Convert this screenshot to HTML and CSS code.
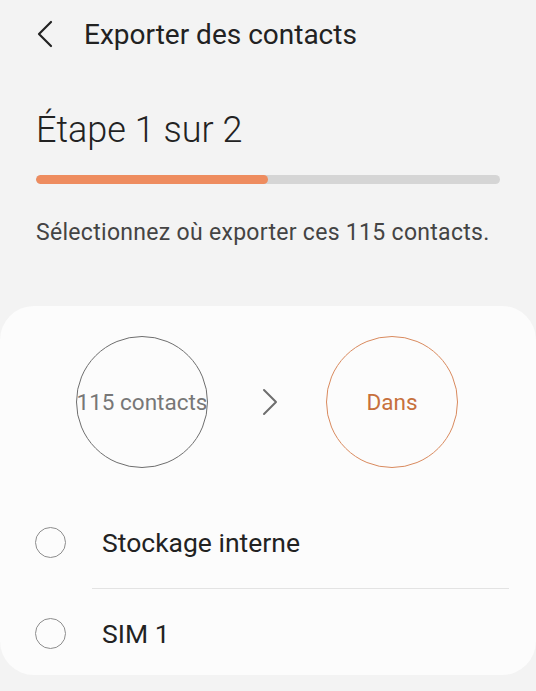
FILE: index.html
```html
<!DOCTYPE html>
<html lang="fr">
<head>
<meta charset="utf-8">
<link rel="stylesheet" href="styles.css">
</head>
<body>
<header class="appbar">
  <svg class="back" width="18" height="28" viewBox="0 0 18 28"><path d="M15 2 L3 14 L15 26" fill="none" stroke="#222" stroke-width="2.2" stroke-linecap="round" stroke-linejoin="round"/></svg>
  <h1 class="title">Exporter des contacts</h1>
</header>
<h2 class="step">Étape 1 sur 2</h2>
<div class="progress"><div class="progress-fill" style="width:50%"></div></div>
<p class="desc">Sélectionnez où exporter ces 115 contacts.</p>
<section class="card">
  <div class="flow">
    <div class="bubble bubble-src">115 contacts</div>
    <svg class="arrow" width="18" height="28" viewBox="0 0 18 28"><path d="M3 2 L15 14 L3 26" fill="none" stroke="#6e6e6e" stroke-width="2" stroke-linecap="round" stroke-linejoin="round"/></svg>
    <div class="bubble bubble-dst">Dans</div>
  </div>
  <ul class="options">
    <li class="option"><span class="radio"></span><span class="label">Stockage interne</span></li>
    <li class="option"><span class="radio"></span><span class="label">SIM 1</span></li>
  </ul>
</section>
</body>
</html>
```
FILE: styles.css
```css
html, body {
  margin: 0;
  padding: 0;
}
body {
  background: #f3f3f3;
  font-family: Roboto, "Noto Sans", "Liberation Sans", sans-serif;
  color: #1f1f1f;
  width: 536px;
  height: 691px;
  overflow: hidden;
}
.appbar {
  display: flex;
  align-items: center;
  height: 68px;
  padding-left: 36px;
}
.back {
  display: block;
  margin-right: 30px;
}
.title {
  margin: 0;
  font-size: 28px;
  font-weight: 400;
  color: #222;
}
.step {
  margin: 38px 0 0 36px;
  font-size: 36px;
  font-weight: 300;
  color: #222;
  line-height: 48px;
}
.progress {
  margin: 21px 36px 0 36px;
  height: 9px;
  border-radius: 5px;
  background: #d5d5d5;
  overflow: hidden;
}
.progress-fill {
  height: 100%;
  background: #ee8c5f;
  border-radius: 5px;
}
.desc {
  margin: 34px 0 0 36px;
  font-size: 23px;
  letter-spacing: 0.3px;
  color: #444;
  line-height: 30px;
}
.card {
  margin-top: 58px;
  background: #fcfcfc;
  border-radius: 34px;
  height: 369px;
  box-sizing: border-box;
  padding-top: 30px;
}
.flow {
  display: flex;
  align-items: center;
  padding-left: 76px;
}
.bubble {
  width: 132px;
  height: 132px;
  border-radius: 50%;
  box-sizing: border-box;
  display: flex;
  align-items: center;
  justify-content: center;
  font-size: 22.5px;
  white-space: nowrap;
}
.bubble-src {
  border: 1.6px solid #6e6e6e;
  color: #777;
}
.bubble-dst {
  border: 1.6px solid #d98a5e;
  color: #c7703c;
}
.arrow {
  display: block;
  margin: 0 47px 0 53px;
}
.options {
  list-style: none;
  margin: 29px 0 0 0;
  padding: 0;
}
.option {
  display: flex;
  align-items: center;
  height: 91px;
  padding-left: 35px;
}
.option + .option {
  height: 88px;
  border-top: 1.5px solid #e3e3e3;
  margin-left: 92px;
  margin-right: 27px;
  padding-left: 0;
}
.option + .option .radio {
  margin-left: -57px;
}
.radio {
  width: 31px;
  height: 31px;
  border-radius: 50%;
  border: 1.8px solid #8d8d8d;
  box-sizing: border-box;
  margin-right: 36px;
  flex: none;
}
.label {
  font-size: 26.5px;
  color: #222;
}
```
